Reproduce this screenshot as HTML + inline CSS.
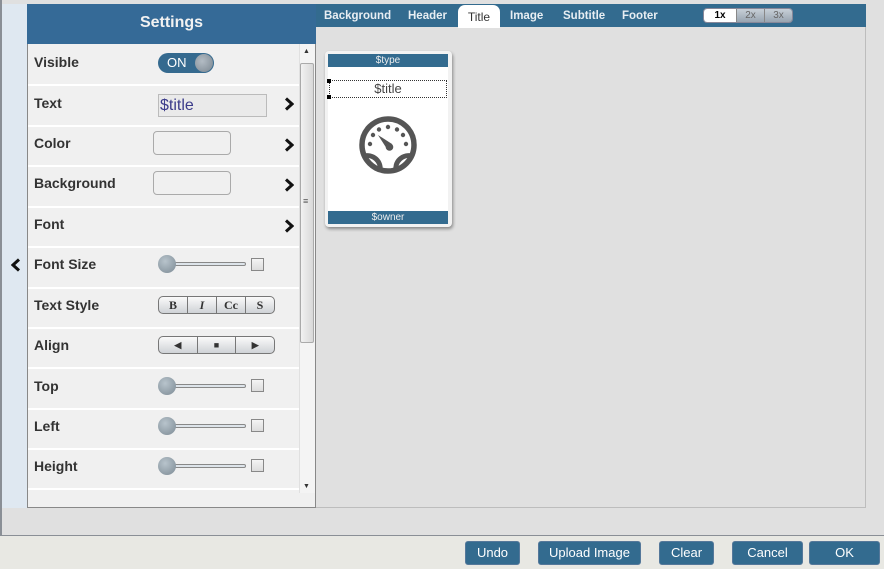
<!DOCTYPE html>
<html><head><style>
*{box-sizing:border-box;margin:0;padding:0}
body{width:884px;height:569px;overflow:hidden;background:#e0e0e0;font-family:"Liberation Sans",sans-serif;position:relative}
.abs{position:absolute}
.lbl{position:absolute;left:34px;font-weight:bold;font-size:14px;color:#333}
.sep{position:absolute;left:28px;width:271px;height:2px;background:#fff}
.slider{position:absolute;left:158px;width:88px;height:18px}
.slider .track{position:absolute;left:8px;right:0;top:7px;height:4px;border:1px solid #888;background:#dde4ea;border-radius:2px}
.slider .knob{position:absolute;left:0;top:0;width:18px;height:18px;border-radius:50%;background:radial-gradient(circle at 40% 35%,#b8c4cc,#7c8a94)}
.cb{position:absolute;left:251px;width:13px;height:13px;border:1px solid #888;background:linear-gradient(#f4f4f4,#dcdcdc)}
.arr{position:absolute;left:284px;width:10px;height:14px}
.box{position:absolute;left:153px;width:78px;height:24px;border:1px solid #aaa;border-radius:4px;background:#f0f0f0}
.seg{position:absolute;left:158px;width:117px;height:18px;border:1px solid #777;border-radius:5px;background:linear-gradient(#fafafa,#cfd2d6);display:flex;font-family:"Liberation Serif",serif;font-size:12px;font-weight:bold;color:#333}
.seg span{flex:1;text-align:center;line-height:16px;border-left:1px solid #777}
.seg span:first-child{border-left:none}
.tab{position:absolute;top:4px;height:23px;line-height:24px;color:#e8eef3;font-size:11.5px;font-weight:bold}
.btn{position:absolute;top:541px;height:24px;background:#336b8f;border:1px solid #55789a;border-radius:3px;color:#fff;font-size:13px;text-align:center;line-height:22px}
</style></head><body>
<svg width="0" height="0" style="position:absolute"><defs><symbol id="chev" viewBox="0 0 10 14"><path d="M2 1.5 L8 7 L2 12.5" fill="none" stroke="#111" stroke-width="3"/></symbol></defs></svg>
<div class="abs" style="left:0;top:0;width:2px;height:540px;background:#8a8f96"></div>
<div class="abs" style="left:2px;top:4px;width:26px;height:504px;background:#dfe8f1"></div>
<div class="abs" style="left:27px;top:4px;width:289px;height:504px;background:#f0f0f0;border:1px solid #888;border-top:none"></div>
<div class="abs" style="left:27px;top:4px;width:289px;height:40px;background:#356a97;color:#f2f2f2;font-weight:bold;font-size:16px;text-align:center;line-height:38px">Settings</div>
<svg class="abs" style="left:11px;top:258px" width="10" height="14" viewBox="0 0 10 14"><path d="M8 1.5 L2 7 L8 12.5" fill="none" stroke="#111" stroke-width="3"/></svg>
<!-- scrollbar -->
<div class="abs" style="left:299px;top:44px;width:16px;height:449px;background:#f4f4f4;border-left:1px solid #e0e0e0"></div>
<div class="abs" style="left:300px;top:63px;width:14px;height:280px;background:linear-gradient(90deg,#f2f2f2,#d8d8d8);border:1px solid #aaa;border-radius:2px"></div>
<div class="abs" style="left:303px;top:48px;font-size:7px;color:#333">&#9650;</div>
<div class="abs" style="left:303px;top:483px;font-size:7px;color:#333">&#9660;</div>
<div class="abs" style="left:303px;top:196px;font-size:9px;color:#555">&#8801;</div>

<div class="lbl" style="top:54px">Visible</div>
<div class="abs" style="left:158px;top:53px;width:56px;height:20px;border-radius:10px;background:#356a8f;color:#fff;font-size:13px;line-height:20px;padding-left:9px">ON</div>
<div class="abs" style="left:195px;top:54px;width:18px;height:18px;border-radius:50%;background:radial-gradient(circle at 40% 40%,#b3bcc4,#7a8690)"></div>
<div class="sep" style="top:84px"></div>
<div class="lbl" style="top:95px">Text</div>
<div class="abs" style="left:158px;top:94px;width:109px;height:23px;border:1px solid #bbb;background:#eaeaea;color:#3b3b8a;font-size:16px;line-height:21px;padding-left:1px">$title</div>
<svg class="arr" style="top:97px"><use href="#chev"/></svg>
<div class="sep" style="top:125px"></div>
<div class="lbl" style="top:135px">Color</div>
<div class="box" style="top:131px"></div>
<svg class="arr" style="top:138px"><use href="#chev"/></svg>
<div class="sep" style="top:165px"></div>
<div class="lbl" style="top:175px">Background</div>
<div class="box" style="top:171px"></div>
<svg class="arr" style="top:178px"><use href="#chev"/></svg>
<div class="sep" style="top:206px"></div>
<div class="lbl" style="top:216px">Font</div>
<svg class="arr" style="top:219px"><use href="#chev"/></svg>
<div class="sep" style="top:246px"></div>
<div class="lbl" style="top:256px">Font Size</div>
<div class="slider" style="top:255px"><div class="track"></div><div class="knob"></div></div>
<div class="cb" style="top:258px"></div>
<div class="sep" style="top:287px"></div>
<div class="lbl" style="top:297px">Text Style</div>
<div class="seg" style="top:296px"><span>B</span><span style="font-style:italic">I</span><span>Cc</span><span>S</span></div>
<div class="sep" style="top:327px"></div>
<div class="lbl" style="top:337px">Align</div>
<div class="seg" style="top:336px;font-size:9px"><span>&#9664;</span><span>&#9632;</span><span>&#9654;</span></div>
<div class="sep" style="top:367px"></div>
<div class="lbl" style="top:378px">Top</div>
<div class="slider" style="top:377px"><div class="track"></div><div class="knob"></div></div>
<div class="cb" style="top:379px"></div>
<div class="sep" style="top:408px"></div>
<div class="lbl" style="top:418px">Left</div>
<div class="slider" style="top:417px"><div class="track"></div><div class="knob"></div></div>
<div class="cb" style="top:419px"></div>
<div class="sep" style="top:448px"></div>
<div class="lbl" style="top:458px">Height</div>
<div class="slider" style="top:457px"><div class="track"></div><div class="knob"></div></div>
<div class="cb" style="top:459px"></div>
<div class="sep" style="top:488px"></div>

<!-- right area -->
<div class="abs" style="left:316px;top:4px;width:550px;height:504px;border-right:1px solid #bdbdbd;border-bottom:1px solid #bdbdbd"></div>
<div class="abs" style="left:316px;top:4px;width:550px;height:23px;background:#336b8f"></div>
<div class="tab" style="left:324px">Background</div>
<div class="tab" style="left:408px">Header</div>
<div class="abs" style="left:458px;top:5px;width:42px;height:23px;background:#fff;border-radius:7px 7px 0 0;color:#333;font-size:12px;text-align:center;line-height:24px">Title</div>
<div class="tab" style="left:510px">Image</div>
<div class="tab" style="left:563px">Subtitle</div>
<div class="tab" style="left:622px">Footer</div>
<div class="abs" style="left:703px;top:8px;width:90px;height:15px;border:1px solid #889;border-radius:4px;overflow:hidden;display:flex;font-size:10px;text-align:center;line-height:13px">
<div style="width:32px;background:#fff;color:#000;font-weight:bold">1x</div>
<div style="flex:1;background:linear-gradient(#c8d0d8,#98a4b0);color:#666;border-left:1px solid #888">2x</div>
<div style="flex:1;background:linear-gradient(#c8d0d8,#98a4b0);color:#666;border-left:1px solid #888">3x</div></div>

<!-- card -->
<div class="abs" style="left:325px;top:51px;width:127px;height:176px;background:#f2f2f2;border-radius:4px;box-shadow:1px 2px 3px rgba(0,0,0,.4)"></div>
<div class="abs" style="left:328px;top:54px;width:120px;height:170px;background:#fff"></div>
<div class="abs" style="left:328px;top:54px;width:120px;height:13px;background:#336b8f;color:#eee;font-size:10px;text-align:center;line-height:13px">$type</div>
<div class="abs" style="left:329px;top:80px;width:118px;height:18px;border:1px dotted #333;color:#444;font-size:13px;text-align:center;line-height:16px">$title</div>
<div class="abs" style="left:327px;top:79px;width:4px;height:4px;background:#000"></div>
<div class="abs" style="left:327px;top:95px;width:4px;height:4px;background:#000"></div>
<svg class="abs" style="left:358px;top:115px" width="60" height="60" viewBox="0 0 60 60">
<circle cx="30" cy="30" r="26" fill="none" stroke="#555" stroke-width="5.5"/>
<path d="M6 41 A13 13 0 0 1 22 56" fill="none" stroke="#555" stroke-width="5"/>
<path d="M54 41 A13 13 0 0 0 38 56" fill="none" stroke="#555" stroke-width="5"/>
<g fill="#555"><circle cx="30" cy="12" r="2.2"/><circle cx="21" cy="14.5" r="2.2"/><circle cx="39" cy="14.5" r="2.2"/><circle cx="15" cy="20" r="2.2"/><circle cx="45" cy="20" r="2.2"/><circle cx="12" cy="29" r="2.2"/><circle cx="48" cy="29" r="2.2"/></g>
<path d="M20 20 L34 29 L29 34 Z" fill="#555"/><circle cx="31.5" cy="32" r="3.8" fill="#555"/>
</svg>
<div class="abs" style="left:328px;top:211px;width:120px;height:13px;background:#336b8f;color:#eee;font-size:10px;text-align:center;line-height:13px">$owner</div>

<!-- bottom -->
<div class="abs" style="left:0;top:535px;width:884px;height:34px;background:#e8e8e3;border-top:1px solid #8a8f96"></div>
<div class="btn" style="left:465px;width:55px">Undo</div>
<div class="btn" style="left:538px;width:103px">Upload Image</div>
<div class="btn" style="left:659px;width:55px">Clear</div>
<div class="btn" style="left:732px;width:71px">Cancel</div>
<div class="btn" style="left:809px;width:71px">OK</div>
</body></html>
